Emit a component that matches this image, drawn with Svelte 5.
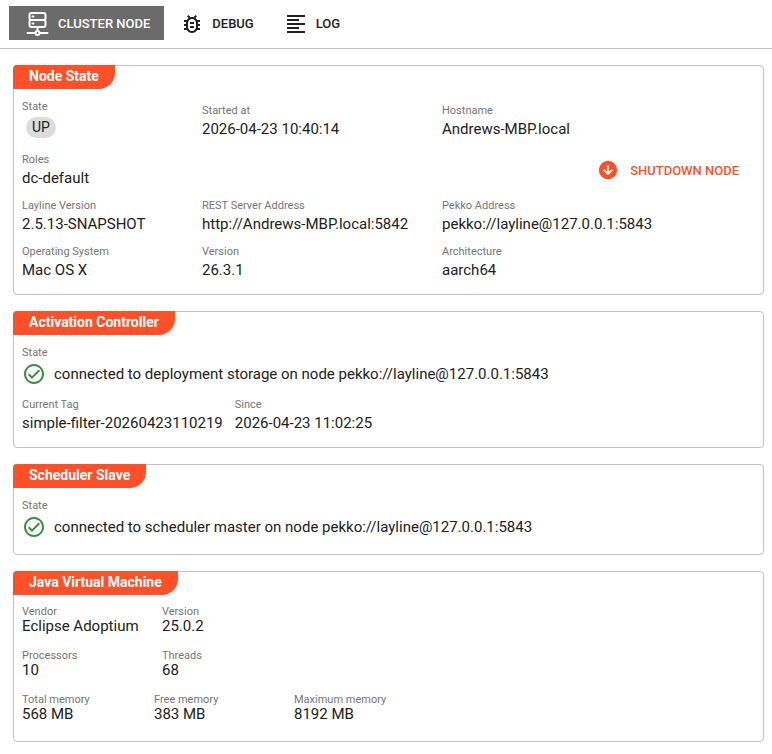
<script>
    const tabs = [
        { id: 'node', label: 'Cluster Node' },
        { id: 'debug', label: 'Debug' },
        { id: 'log', label: 'Log' }
    ];

    let active = $state('node');
</script>

{#snippet field(label, value)}
    <div class="field">
        <div class="label">{label}</div>
        <div class="value">{value}</div>
    </div>
{/snippet}

{#snippet status(text)}
    <div class="field">
        <div class="label">State</div>
        <div class="value status">
            <svg class="check" viewBox="0 0 24 24" aria-hidden="true">
                <path d="M12 2C6.500 2 2 6.500 2 12S6.500 22 12 22 22 17.500 22 12 17.500 2 12 2M12 20C7.590 20 4 16.410 4 12S7.590 4 12 4 20 7.590 20 12 16.410 20 12 20M16.590 7.580L10 14.170L7.410 11.590L6 13L10 17L18 9L16.590 7.580Z" />
            </svg>
            <span>{text}</span>
        </div>
    </div>
{/snippet}

<nav class="toolbar">
    {#each tabs as tab (tab.id)}
        <button class="tab" class:active={active === tab.id} onclick={() => (active = tab.id)}>
            {#if tab.id === 'node'}
                <svg class="icon" viewBox="0 0 24 24" aria-hidden="true">
                    <g fill="none" stroke="currentColor" stroke-width="2" stroke-linecap="round">
                        <rect x="3.500" y="1" width="16" height="7" rx="2" />
                        <rect x="3.500" y="8" width="16" height="7" rx="2" />
                        <path d="M6.500 4.500h1M6.500 11.500h1M11.500 15v4M1.500 21h7.500M14 21h7.500" />
                        <circle cx="11.500" cy="21" r="2" />
                    </g>
                </svg>
            {:else if tab.id === 'debug'}
                <svg class="icon" viewBox="0 0 24 24" aria-hidden="true">
                    <path d="M20 8H17.190C16.740 7.200 16.120 6.500 15.370 6L17 4.410L15.590 3L13.420 5.170C12.960 5.060 12.490 5 12 5S11.050 5.060 10.590 5.170L8.410 3L7 4.410L8.620 6C7.880 6.500 7.260 7.210 6.810 8H4V10H6.090C6.030 10.330 6 10.660 6 11V12H4V14H6V15C6 15.340 6.030 15.670 6.090 16H4V18H6.810C8.470 20.870 12.140 21.840 15 20.180C15.910 19.660 16.670 18.900 17.190 18H20V16H17.910C17.970 15.670 18 15.340 18 15V14H20V12H18V11C18 10.660 17.970 10.330 17.910 10H20V8M16 15C16 17.210 14.210 19 12 19S8 17.210 8 15V11C8 8.790 9.790 7 12 7S16 8.790 16 11V15M14 10V12H10V10H14M10 14H14V16H10V14Z" />
                </svg>
            {:else}
                <svg class="icon" viewBox="0 0 24 24" aria-hidden="true">
                    <path d="M3 3H21V5H3V3M3 7H15V9H3V7M3 11H21V13H3V11M3 15H15V17H3V15M3 19H21V21H3V19Z" />
                </svg>
            {/if}
            <span>{tab.label}</span>
        </button>
    {/each}
</nav>

<main>
    <section class="card">
        <h2>Node State</h2>
        <div class="rows">
            <div class="row">
                <div class="field">
                    <div class="label">State</div>
                    <span class="chip">UP</span>
                </div>
                {@render field('Started at', '2026-04-23 10:40:14')}
                {@render field('Hostname', 'Andrews-MBP.local')}
            </div>
            <div class="row split">
                {@render field('Roles', 'dc-default')}
                <button class="shutdown">
                    <svg class="icon" viewBox="0 0 24 24" aria-hidden="true">
                        <path d="M12 1A11 11 0 0 1 23 12A11 11 0 0 1 12 23A11 11 0 0 1 1 12A11 11 0 0 1 12 1M11 6V14.500L7.500 11L6.080 12.420L12 18.340L17.920 12.420L16.500 11L13 14.500V6H11Z" />
                    </svg>
                    <span>Shutdown Node</span>
                </button>
            </div>
            <div class="row">
                {@render field('Layline Version', '2.5.13-SNAPSHOT')}
                {@render field('REST Server Address', 'http://Andrews-MBP.local:5842')}
                {@render field('Pekko Address', 'pekko://layline@127.0.0.1:5843')}
            </div>
            <div class="row">
                {@render field('Operating System', 'Mac OS X')}
                {@render field('Version', '26.3.1')}
                {@render field('Architecture', 'aarch64')}
            </div>
        </div>
    </section>

    <section class="card">
        <h2>Activation Controller</h2>
        <div class="rows">
            {@render status('connected to deployment storage on node pekko://layline@127.0.0.1:5843')}
            <div class="inline">
                {@render field('Current Tag', 'simple-filter-20260423110219')}
                {@render field('Since', '2026-04-23 11:02:25')}
            </div>
        </div>
    </section>

    <section class="card">
        <h2>Scheduler Slave</h2>
        <div class="rows">
            {@render status('connected to scheduler master on node pekko://layline@127.0.0.1:5843')}
        </div>
    </section>

    <section class="card">
        <h2>Java Virtual Machine</h2>
        <div class="rows compact">
            <div class="jvm">
                {@render field('Vendor', 'Eclipse Adoptium')}
                {@render field('Version', '25.0.2')}
            </div>
            <div class="jvm">
                {@render field('Processors', '10')}
                {@render field('Threads', '68')}
            </div>
            <div class="jvm memory">
                {@render field('Total memory', '568 MB')}
                {@render field('Free memory', '383 MB')}
                {@render field('Maximum memory', '8192 MB')}
            </div>
        </div>
    </section>
</main>

<style>
    :global(body) {
        margin: 0;
        background: #fff;
        color: #212121;
        font-family: Roboto, 'Liberation Sans', sans-serif;
        font-size: 15px;
    }

    svg {
        flex: none;
        fill: currentColor;
    }

    button {
        display: flex;
        align-items: center;
        border: 0;
        background: none;
        color: inherit;
        font-family: inherit;
        font-size: 13px;
        font-weight: 500;
        text-transform: uppercase;
        cursor: pointer;
    }

    .toolbar {
        display: flex;
        gap: 2px;
        padding: 6px 9px 8px;
        border-bottom: 1px solid #c2c2c2;
    }

    .tab {
        gap: 8px;
        height: 34px;
        padding: 0 14px;
    }

    .tab.active {
        padding: 0 14px 0 17px;
        background: #6b6b6b;
        color: #fff;
    }

    .icon {
        width: 24px;
        height: 24px;
    }

    .tab .icon {
        margin-top: 2px;
    }

    main {
        display: flex;
        flex-direction: column;
        gap: 16px;
        padding: 16px 8px 12px 13px;
    }

    .card {
        border: 1px solid #c2c2c2;
        border-radius: 4px;
    }

    h2 {
        width: fit-content;
        margin: -1px 0 0 -1px;
        padding: 0 16px 2px;
        border-radius: 4px 0 16px 0;
        background: #ff5029;
        color: #fff;
        font-size: 14px;
        font-weight: 700;
        line-height: 22px;
    }

    .rows {
        display: flex;
        flex-direction: column;
        gap: 8px;
        padding: 9px 8px 13px;
    }

    .row {
        display: grid;
        grid-template-columns: 180px 240px 1fr;
        align-items: center;
    }

    .row.split {
        grid-template-columns: 1fr auto;
    }

    .label {
        color: #757575;
        font-size: 11px;
        line-height: 18px;
    }

    .value {
        padding-bottom: 2px;
        line-height: 18px;
        white-space: nowrap;
    }

    .chip {
        display: block;
        width: fit-content;
        margin: 1px 4px 5px;
        padding: 0 6px;
        border-radius: 11px;
        background: #dcdcdc;
        font-size: 14px;
        line-height: 21px;
    }

    .shutdown {
        gap: 12px;
        height: 36px;
        padding: 0 16px;
        color: #ff5029;
    }

    .shutdown .icon {
        width: 20px;
        height: 20px;
    }

    .value.status {
        display: flex;
        align-items: center;
        gap: 8px;
        line-height: 24px;
    }

    .check {
        width: 24px;
        height: 24px;
        fill: #388e3c;
    }

    .inline {
        display: flex;
        gap: 12px;
    }

    .rows.compact {
        gap: 16px;
        padding-bottom: 21px;
    }

    .compact .label {
        line-height: 16px;
    }

    .compact .value {
        padding-bottom: 0;
        line-height: 12px;
    }

    .jvm {
        display: grid;
        grid-template-columns: 140px 140px 1fr;
    }

    .jvm.memory {
        grid-template-columns: 132px 140px 1fr;
    }
</style>
